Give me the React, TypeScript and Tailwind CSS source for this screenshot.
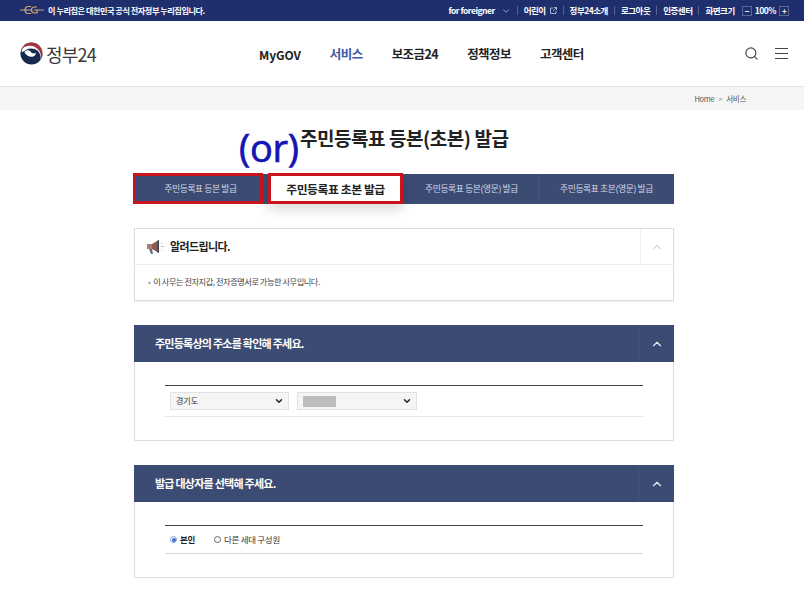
import React from 'react';
import {ChevronDown, ChevronUp, Search} from 'lucide-react';

const font = "font-['Noto_Sans_CJK_KR','Noto_Sans',sans-serif]";

const TopLink = ({children, last}: { children: React.ReactNode; last?: boolean }) => (
	<>
		<span className="flex items-center gap-1">{children}</span>
		{!last && <span className="mx-[6px] h-[9px] w-px bg-[#56638f]"/>}
	</>
);

const Logo = () => (
	<svg width="23" height="23" viewBox="0 0 24 24">
		<circle cx="12" cy="12" r="11.5" fill="#16294f"/>
		<path d="M1.5 10.5C2.5 4.5 7 .5 12 .5c6.5 0 11.5 5 11.5 11.5 0 2.5-.8 4.5-2 6.5 .5-3.5-.5-7-3-9.500C15 6.500 10 6 6.500 8 5 9 3 10 1.500 10.500Z" fill="#fff"/>
		<path d="M12 .5c6.500 0 11.500 5 11.500 11.500 0 2.500-.8 4.500-2 6.500 1-4 .2-8-2.800-11C15.500 4.300 11 3.300 7 4.500 5 5 3 6 1.800 7.500 3.500 3.200 7.500 .5 12 .5Z" fill="#a5323f"/>
		<path d="M4.500 10.500c2-2.500 5-2.500 6.500-.5 1.500 2.500 4 2.500 5.500 1 .3 2.500-1.500 4.500-4.500 4.500-3 0-6-2-7.500-5Z" fill="#fff"/>
	</svg>
);

const PanelHead = ({title}: { title: string }) => (
	<div className="-mx-px flex h-[37px] items-center justify-between bg-[#3c4b73] pl-[21px] text-[11px] font-bold tracking-[-0.75px] text-white">
		<span>{title}</span>
		<div className="flex h-full w-[36px] items-center justify-center border-l border-[#46557c]">
			<ChevronUp className="size-[14px] text-[#e8ecf5]" strokeWidth={2}/>
		</div>
	</div>
);

const FakeSelect = ({w, children}: { w: string; children: React.ReactNode }) => (
	<div className={`flex h-[18px] ${w} items-center justify-between border border-[#e2e2e2] bg-[#f5f5f5] pl-[5px] pr-[4px] text-[8px] text-[#333]`}>
		{children}
		<ChevronDown className="size-[10px] text-[#222]" strokeWidth={3.5}/>
	</div>
);

export default function App() {
	return (
		<div className={`relative h-[589px] w-[804px] overflow-hidden bg-white ${font}`}>
			{/* gov banner */}
			<div className="flex h-[21px] items-center justify-between bg-[#1f2e6c] pl-[20px] pr-[15px] text-[8.500px] font-bold tracking-[-0.5px] text-white">
				<div className="flex items-center gap-[4px]">
					<svg width="24" height="10" viewBox="0 0 24 10" fill="none" stroke="#c8a874" strokeWidth="1.200">
						<path d="M0 5h7M17 5h7"/>
						<path d="M11 1.500H8.500a3.500 3.500 0 0 0 0 7H11M6 5h5"/>
						<path d="M17 2H14.500a3 3 0 0 0 0 6H17V5h-3"/>
					</svg>
					<span className="text-[8.200px]">이 누리집은 대한민국 공식 전자정부 누리집입니다.</span>
				</div>
				<div className="flex items-center">
					<span className="flex items-center gap-[6px]">for foreigner<ChevronDown className="size-[10px] text-[#aab3d0]"/></span>
					<span className="mx-[6px] h-[9px] w-px bg-[#56638f]"/>
					<TopLink>어린이
						<svg width="7" height="7" viewBox="0 0 7 7" fill="none" stroke="#c9d0e6" strokeWidth=".8"><path d="M3 1H.5v5.500H6V4M4 .5h2.500V3M6.500 .5 3 4"/></svg>
					</TopLink>
					<TopLink>정부24소개</TopLink>
					<TopLink>로그아웃</TopLink>
					<TopLink>인증센터</TopLink>
					<TopLink last>화면크기</TopLink>
					<span className="ml-[7px] flex size-[10px] items-center justify-center border border-[#5b6896] text-[8px] leading-none">−</span>
					<span className="mx-[3px]">100%</span>
					<span className="flex size-[10px] items-center justify-center border border-[#5b6896] text-[8px] leading-none">+</span>
				</div>
			</div>

			{/* header */}
			<div className="flex h-[66px] items-center border-b border-[#e6e6e6] pl-[20px] pr-[16px]">
				<div className="flex w-[239px] items-center gap-[3px]">
					<Logo/>
					<span className="text-[18px] leading-none tracking-[-0.8px] text-[#3a3a3a]">정부24</span>
				</div>
				<nav className="flex items-center gap-[29px] pt-[2px] text-[12.500px] font-bold tracking-[-0.55px] text-[#222]">
					<span className="text-[12px] tracking-[-0.1px]">MyGOV</span>
					<span className="text-[#3f5aa6]">서비스</span>
					<span>보조금24</span>
					<span>정책정보</span>
					<span>고객센터</span>
				</nav>
				<div className="ml-auto flex items-center gap-[16px] text-[#444]">
					<Search className="size-[15px]" strokeWidth={1.800}/>
					<div className="flex w-[13px] flex-col gap-[4px]">
						<span className="h-px bg-[#444]"/>
						<span className="h-px bg-[#444]"/>
						<span className="h-px bg-[#444]"/>
					</div>
				</div>
			</div>

			{/* breadcrumb */}
			<div className="flex h-[23px] items-center justify-end gap-[4px] bg-[#f5f5f5] pr-[58px] text-[7.500px] tracking-[-0.3px] text-[#555]">
				<span>Home</span>
				<span className="text-[#888]">&gt;</span>
				<span>서비스</span>
			</div>

			<div className="mx-[134px] w-[540px]">
				<h1 className="mt-[15px] h-[26px] pl-[166px] text-[19px] leading-[26px] font-bold tracking-[-0.45px] text-[#222]">
					주민등록표 등본(초본) 발급
				</h1>

				{/* tabs */}
				<div className="mt-[23px] flex h-[30px] bg-[#3c4b73] text-[8.800px] tracking-[-0.4px] text-[#d5dae8]">
					<div className="-mt-px -ml-px flex h-[31px] w-[130px] items-center justify-center border-[3px] border-[#c8141c] pl-[5px]">주민등록표 등본 발급</div>
					<div className="-mt-px ml-[5px] flex h-[31px] w-[135px] items-center justify-center border-[3px] border-[#c8141c] bg-white text-[11.800px] font-bold text-[#222] shadow-[0_6px_12px_rgba(0,0,0,0.14)]">주민등록표 초본 발급</div>
					<div className="flex w-[136px] items-center justify-center border-r border-[#46557c] pl-[2px]">주민등록표 등본(영문) 발급</div>
					<div className="flex flex-1 items-center justify-center">주민등록표 초본(영문) 발급</div>
				</div>

				{/* notice */}
				<div className="mt-[24px] h-[73px] border border-[#dcdcdc] shadow-[0_1px_1px_rgba(0,0,0,0.06)]">
					<div className="flex h-[36px] items-center justify-between border-b border-[#eeeeee] pl-[11px]">
						<div className="flex items-center gap-[5px] text-[11px] font-bold tracking-[-0.6px] text-[#222]">
							<svg width="19" height="18" viewBox="0 0 19 18">
								<path d="M1 6h5v5H1z" fill="#a98077"/>
								<path d="M6 6l7-4v13l-7-4z" fill="#8d5a4e"/>
								<path d="M3 11h3l1 5H5z" fill="#666f80"/>
								<path d="M11 3l2-1v13l-2-1z" fill="#444c60"/>
								<path d="M15 5h1M15 8.500h3M15 12h1" stroke="#aaa" strokeWidth=".8"/>
							</svg>
							<span>알려드립니다.</span>
						</div>
						<div className="flex h-full w-[33px] items-center justify-center border-l border-[#f0f0f0]">
							<ChevronUp className="size-[14px] text-[#b0b0b0]" strokeWidth={1.500}/>
						</div>
					</div>
					<div className="pt-[10px] pl-[13px] text-[8.200px] tracking-[-0.45px] text-[#444]">
						<span className="mr-[3px] text-[#999]">•</span>이 사무는 전자지갑, 전자증명서로 가능한 사무입니다.
					</div>
				</div>

				{/* address */}
				<div className="mt-[24px] h-[116px] border-x border-b border-[#dedede]">
					<PanelHead title="주민등록상의 주소를 확인해 주세요."/>
					<div className="mx-[30px] mt-[23px] border-t border-[#444] pt-[6px]">
						<div className="flex gap-[8px] border-b border-[#e6e6e6] pb-[6px] pl-[5px]">
							<FakeSelect w="w-[119px]"><span>경기도</span></FakeSelect>
							<FakeSelect w="w-[120px]"><span className="h-[11px] w-[33px] bg-[#bdbdbd]"/></FakeSelect>
						</div>
					</div>
				</div>

				{/* target */}
				<div className="mt-[24px] h-[113px] border-x border-b border-[#dedede]">
					<PanelHead title="발급 대상자를 선택해 주세요."/>
					<div className="mx-[30px] mt-[23px] flex h-[29px] items-center border-y border-t-[#444] border-b-[#d8d8d8] pl-[5px] text-[8.500px] tracking-[-0.3px] text-[#333]">
						<span className="mr-[3px] flex size-[7px] items-center justify-center rounded-full border border-[#7f9ce0]">
							<span className="size-[4px] rounded-full bg-[#3f6fd8]"/>
						</span>
						<span className="mr-[19px] font-bold text-[#222]">본인</span>
						<span className="mr-[3px] size-[7px] rounded-full border border-[#666]"/>
						<span>다른 세대 구성원</span>
					</div>
				</div>
			</div>

			{/* annotation drawn on the screenshot */}
			<span className="absolute top-[122px] left-[239px] font-['Open_Sans',sans-serif] text-[38px] leading-[50px] font-normal tracking-[-0.3px] text-[#1414b4] [-webkit-text-stroke:0.7px_#1414b4]">(or)</span>
		</div>
	);
}
